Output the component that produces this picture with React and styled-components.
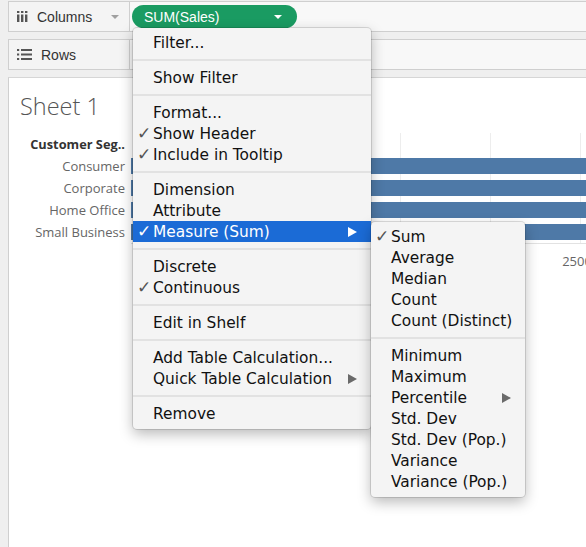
import styled, { createGlobalStyle } from "styled-components";

const GlobalStyle = createGlobalStyle`
  html, body {
    margin: 0;
    padding: 0;
  }
  body {
    background: #efefef;
    font-family: "Liberation Sans", Arial, sans-serif;
  }
`;

const Page = styled.div`
  position: relative;
  width: 586px;
  height: 547px;
  overflow: hidden;
  display: flex;
  flex-direction: column;
  padding-left: 8px;
  box-sizing: border-box;
  background: #efefef;
`;

const Shelf = styled.div`
  display: flex;
  flex-shrink: 0;
  height: 31px;
  box-sizing: border-box;
  margin-top: ${(p) => p.$top}px;
  border: 1px solid #cfcfcf;
  border-right: none;
`;

const ShelfLabel = styled.div`
  width: 121px;
  display: flex;
  align-items: center;
  gap: 9px;
  padding-left: 8px;
  box-sizing: border-box;
  background: #f4f4f4;
  border-right: 1px solid #cfcfcf;
  font-size: 14px;
  color: #333;
`;

const ShelfDrop = styled.div`
  flex: 1;
  display: flex;
  align-items: center;
  padding-left: 2px;
  background: #f8f8f8;
`;

const ShelfCaret = styled.span`
  margin-left: auto;
  margin-right: 10px;
  width: 0;
  height: 0;
  border-left: 4px solid transparent;
  border-right: 4px solid transparent;
  border-top: 4px solid #a0a0a0;
`;

const Pill = styled.div`
  width: 165px;
  height: 23px;
  box-sizing: border-box;
  display: flex;
  align-items: center;
  padding: 0 15px 0 12px;
  border-radius: 12px;
  background: #1a9b62;
  color: #fff;
  font-size: 14px;
`;

const PillCaret = styled.span`
  margin-left: auto;
  width: 0;
  height: 0;
  border-left: 4px solid transparent;
  border-right: 4px solid transparent;
  border-top: 4px solid #fff;
`;

const Sheet = styled.div`
  flex: 1;
  margin-top: 7px;
  padding-top: 15px;
  background: #fff;
  border-top: 1px solid #d6d6d6;
  border-left: 1px solid #cfcfcf;
`;

const Title = styled.div`
  margin-left: 11px;
  font-family: "Open Sans", sans-serif;
  font-weight: 300;
  font-size: 23.5px;
  line-height: 26px;
  color: #555;
`;

const Chart = styled.div`
  margin-top: 14px;
  display: flex;
  flex-direction: column;
`;

const ChartRow = styled.div`
  display: grid;
  grid-template-columns: 122px 1fr;
  height: ${(p) => p.$h || 22}px;
`;

const RowLabel = styled.div`
  text-align: right;
  padding-right: 6px;
  font-family: "Open Sans", sans-serif;
  font-size: ${(p) => (p.$head ? 12.8 : 13)}px;
  font-weight: ${(p) => (p.$head ? 700 : 400)};
  color: ${(p) => (p.$head ? "#333" : "#666")};
  line-height: 22px;
  white-space: nowrap;
`;

const Plot = styled.div`
  display: flex;
  align-items: center;
  background: repeating-linear-gradient(
    to right,
    transparent 0 89px,
    #ededed 89px 90px
  );
`;

const Bar = styled.div`
  width: 100%;
  height: 16px;
  background: #4e79a7;
`;

const AxisCell = styled.div`
  border-top: 1px solid #e2e2e2;
  padding-top: 8px;
`;

const Ticks = styled.div`
  display: flex;
  margin-left: -45px;
`;

const Tick = styled.span`
  flex: 0 0 90px;
  text-align: center;
  font-family: "Open Sans", sans-serif;
  font-size: 13px;
  color: #666;
  visibility: ${(p) => (p.$hidden ? "hidden" : "visible")};
`;

const Menu = styled.div`
  position: absolute;
  left: ${(p) => p.$x}px;
  top: ${(p) => p.$y}px;
  width: ${(p) => p.$w}px;
  box-sizing: border-box;
  padding: 4px 0 5px;
  background: #f4f4f4;
  border-radius: 4px;
  box-shadow: 0 0 0 1px rgba(0, 0, 0, 0.12), 0 5px 14px rgba(0, 0, 0, 0.28);
  font-family: "DejaVu Sans", sans-serif;
  font-size: 15.4px;
`;

const Item = styled.div`
  display: flex;
  align-items: center;
  height: 21px;
  padding-right: 14px;
  background: ${(p) => (p.$active ? "#1b6bd6" : "transparent")};
  color: ${(p) => (p.$active ? "#fff" : "#111")};
  white-space: nowrap;
`;

const Check = styled.span`
  flex: 0 0 20px;
  padding-left: 4px;
  box-sizing: border-box;
  font-size: 17px;
  line-height: 21px;
  color: ${(p) => (p.$active ? "#fff" : "#555")};
`;

const Arrow = styled.span`
  margin-left: auto;
  width: 0;
  height: 0;
  border-top: 5px solid transparent;
  border-bottom: 5px solid transparent;
  border-left: 9px solid ${(p) => (p.$active ? "#fff" : "#6a6a6a")};
`;

const Separator = styled.div`
  height: 2px;
  margin: 6px 0;
  background: #e2e2e2;
`;

function ColumnsIcon() {
  return (
    <svg width="11" height="11" viewBox="0 0 11 11">
      {[0, 4, 8].map((x) => (
        <g key={x} fill="#555">
          <rect x={x} y="0" width="2.4" height="2" />
          <rect x={x} y="3.5" width="2.4" height="7.5" />
        </g>
      ))}
    </svg>
  );
}

function RowsIcon() {
  return (
    <svg width="15" height="11" viewBox="0 0 15 11">
      {[0, 4.5, 9].map((y) => (
        <g key={y} fill="#555">
          <rect x="0" y={y} width="2.2" height="2" />
          <rect x="4" y={y} width="11" height="2" />
        </g>
      ))}
    </svg>
  );
}

const mainMenu = [
  [{ label: "Filter..." }],
  [{ label: "Show Filter" }],
  [
    { label: "Format..." },
    { label: "Show Header", checked: true },
    { label: "Include in Tooltip", checked: true },
  ],
  [
    { label: "Dimension" },
    { label: "Attribute" },
    { label: "Measure (Sum)", checked: true, active: true, sub: true },
  ],
  [{ label: "Discrete" }, { label: "Continuous", checked: true }],
  [{ label: "Edit in Shelf" }],
  [
    { label: "Add Table Calculation..." },
    { label: "Quick Table Calculation", sub: true },
  ],
  [{ label: "Remove" }],
];

const measureMenu = [
  [
    { label: "Sum", checked: true },
    { label: "Average" },
    { label: "Median" },
    { label: "Count" },
    { label: "Count (Distinct)" },
  ],
  [
    { label: "Minimum" },
    { label: "Maximum" },
    { label: "Percentile", sub: true },
    { label: "Std. Dev" },
    { label: "Std. Dev (Pop.)" },
    { label: "Variance" },
    { label: "Variance (Pop.)" },
  ],
];

const segments = ["Consumer", "Corporate", "Home Office", "Small Business"];
// only the last tick label peeks out from behind the menus
const ticks = ["0K", "500K", "1000K", "1500K", "2000K", "2500K"];

function MenuList({ groups, x, y, w }) {
  return (
    <Menu $x={x} $y={y} $w={w}>
      {groups.map((group, gi) => (
        <div key={gi}>
          {gi > 0 && <Separator />}
          {group.map((item) => (
            <Item key={item.label} $active={item.active}>
              <Check $active={item.active}>{item.checked ? "✓" : ""}</Check>
              {item.label}
              {item.sub && <Arrow $active={item.active} />}
            </Item>
          ))}
        </div>
      ))}
    </Menu>
  );
}

export default function App() {
  return (
    <>
      <GlobalStyle />
      <Page>
        <Shelf $top={1}>
          <ShelfLabel>
            <ColumnsIcon />
            Columns
            <ShelfCaret />
          </ShelfLabel>
          <ShelfDrop>
            <Pill>
              SUM(Sales)
              <PillCaret />
            </Pill>
          </ShelfDrop>
        </Shelf>
        <Shelf $top={7}>
          <ShelfLabel>
            <RowsIcon />
            Rows
          </ShelfLabel>
          <ShelfDrop />
        </Shelf>
        <Sheet>
          <Title>Sheet 1</Title>
          <Chart>
            <ChartRow>
              <RowLabel $head>Customer Seg..</RowLabel>
              <Plot />
            </ChartRow>
            {segments.map((s) => (
              <ChartRow key={s}>
                <RowLabel>{s}</RowLabel>
                <Plot>
                  <Bar />
                </Plot>
              </ChartRow>
            ))}
            <ChartRow $h={30}>
              <div />
              <AxisCell>
                <Ticks>
                  {ticks.map((t, i) => (
                    <Tick key={t} $hidden={i < ticks.length - 1}>
                      {t}
                    </Tick>
                  ))}
                </Ticks>
              </AxisCell>
            </ChartRow>
          </Chart>
        </Sheet>
        <MenuList groups={mainMenu} x={133} y={28} w={238} />
        <MenuList groups={measureMenu} x={371} y={222} w={154} />
      </Page>
    </>
  );
}
